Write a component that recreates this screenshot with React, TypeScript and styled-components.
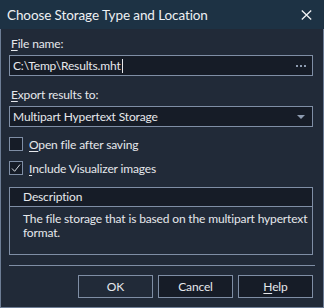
import React from "react";
import styled, { createGlobalStyle } from "styled-components";

const GlobalStyle = createGlobalStyle`
  html, body {
    margin: 0;
    padding: 0;
    background: #212a38;
  }
  body {
    font-family: Lato, Roboto, "Liberation Sans", sans-serif;
    font-size: 12px;
    letter-spacing: -0.15px;
    color: #e6e8ec;
  }
`;

const Window = styled.div`
  width: 324px;
  height: 308px;
  display: flex;
  flex-direction: column;
  box-sizing: border-box;
`;

const TitleBar = styled.div`
  height: 29px;
  flex: none;
  background: #1d3244;
  display: flex;
  align-items: center;
  justify-content: space-between;
  padding: 0 10px 0 7px;
`;

const Title = styled.span`
  font-size: 13.5px;
  letter-spacing: -0.1px;
  color: #eef0f3;
`;

const CloseButton = styled.span`
  display: flex;
  align-items: center;
  justify-content: center;
  width: 16px;
  height: 16px;
`;

const Body = styled.div`
  flex: 1;
  display: flex;
  flex-direction: column;
  background: #212a38;
  border: 1px solid #6d7d95;
  border-top: none;
  padding: 7px 10px 0 8px;
`;

const Label = styled.div<{ gap?: number }>`
  line-height: 15px;
  height: 15px;
  padding-left: 2px;
  margin-bottom: ${(p) => p.gap ?? 4}px;
`;

const Key = styled.span`
  text-decoration: underline;
  text-underline-offset: 2px;
`;

const Field = styled.div<{ gap?: number }>`
  height: 21px;
  box-sizing: border-box;
  border: 1px solid #7f8ea5;
  background: #161c27;
  display: flex;
  align-items: center;
  padding: 0 6px 0 3px;
  margin-bottom: ${(p) => p.gap ?? 0}px;
`;

const FieldText = styled.span`
  flex: 1;
  white-space: nowrap;
`;

const Caret = styled.span`
  display: inline-block;
  width: 1px;
  height: 14px;
  margin-left: 1px;
  background: #e6e8ec;
  vertical-align: -3px;
`;

const Dots = styled.span`
  display: flex;
  gap: 2px;
  span {
    width: 2px;
    height: 2px;
    background: #8d9bb0;
  }
`;

const Arrow = styled.span`
  width: 0;
  height: 0;
  border-left: 4px solid transparent;
  border-right: 4px solid transparent;
  border-top: 4px solid #8d9bb0;
  margin-right: 1px;
`;

const CheckRow = styled.div<{ gap?: number }>`
  display: flex;
  align-items: center;
  height: 14px;
  gap: 6px;
  margin-bottom: ${(p) => p.gap ?? 0}px;
`;

const Box = styled.span`
  width: 14px;
  height: 14px;
  box-sizing: border-box;
  border: 1px solid #7f8ea5;
  background: #161c27;
  display: flex;
  align-items: center;
  justify-content: center;
`;

const Group = styled.div`
  border: 1px solid #7f8ea5;
  height: 68px;
  box-sizing: border-box;
  display: flex;
  flex-direction: column;
`;

const GroupHeader = styled.div`
  height: 19px;
  flex: none;
  box-sizing: border-box;
  background: #161c27;
  border-bottom: 1px solid #7f8ea5;
  padding-left: 13px;
  line-height: 18px;
`;

const GroupText = styled.div`
  padding: 5px 2px 0 13px;
  line-height: 14px;
`;

const Separator = styled.div`
  height: 1px;
  background: #7f8ea5;
  margin: 10px -2px 9px 0;
`;

const Buttons = styled.div`
  display: flex;
  justify-content: flex-end;
  gap: 5px;
`;

const Button = styled.div<{ primary?: boolean }>`
  width: 75px;
  height: 23px;
  box-sizing: border-box;
  border: 1px solid #7f8ea5;
  background: ${(p) => (p.primary ? "#212a38" : "#161c27")};
  display: flex;
  align-items: center;
  justify-content: center;
`;

export default function App() {
  return (
    <>
      <GlobalStyle />
      <Window>
        <TitleBar>
          <Title>Choose Storage Type and Location</Title>
          <CloseButton>
            <svg width="11" height="10" viewBox="0 0 11 10">
              <path d="M0.8 0.5 L10.2 9.5 M10.2 0.5 L0.8 9.5" stroke="#f2f3f5" strokeWidth="1.3" fill="none" />
            </svg>
          </CloseButton>
        </TitleBar>
        <Body>
          <Label gap={4}>
            <Key>F</Key>ile name:
          </Label>
          <Field gap={11}>
            <FieldText>
              C:\Temp\Results.mht
              <Caret />
            </FieldText>
            <Dots>
              <span />
              <span />
              <span />
            </Dots>
          </Field>
          <Label gap={4}>
            <Key>E</Key>xport results to:
          </Label>
          <Field gap={10}>
            <FieldText>Multipart Hypertext Storage</FieldText>
            <Arrow />
          </Field>
          <CheckRow gap={10}>
            <Box />
            <span>
              <Key>O</Key>pen file after saving
            </span>
          </CheckRow>
          <CheckRow gap={12}>
            <Box>
              <svg width="12" height="12" viewBox="0 0 12 12">
                <path d="M2 6.5 L4.6 9.3 L10 2.5" stroke="#d4d9e0" strokeWidth="1" fill="none" />
              </svg>
            </Box>
            <span>
              <Key>I</Key>nclude Visualizer images
            </span>
          </CheckRow>
          <Group>
            <GroupHeader>Description</GroupHeader>
            <GroupText>The file storage that is based on the multipart hypertext format.</GroupText>
          </Group>
          <Separator />
          <Buttons>
            <Button primary>OK</Button>
            <Button>Cancel</Button>
            <Button>
              <span>
                <Key>H</Key>elp
              </span>
            </Button>
          </Buttons>
        </Body>
      </Window>
    </>
  );
}
